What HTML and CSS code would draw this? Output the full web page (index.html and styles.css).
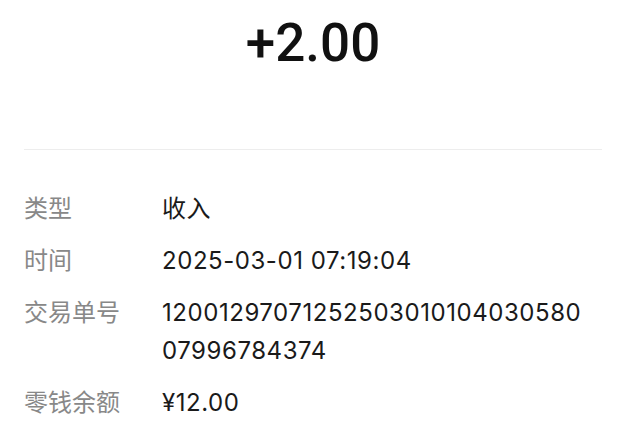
FILE: index.html
```html
<!DOCTYPE html>
<html lang="zh">
<head>
<meta charset="utf-8">
<link rel="stylesheet" href="styles.css">
</head>
<body>
<div class="page">
  <div class="amount">+2.00</div>
  <div class="divider"></div>
  <div class="details">
    <div class="row"><div class="label">类型</div><div class="value">收入</div></div>
    <div class="row"><div class="label">时间</div><div class="value">2025-03-01 07:19:04</div></div>
    <div class="row"><div class="label">交易单号</div><div class="value">1200129707125250301010403058007996784374</div></div>
    <div class="row"><div class="label">零钱余额</div><div class="value">¥12.00</div></div>
  </div>
</div>
</body>
</html>
```
FILE: styles.css
```css
html, body {
  margin: 0;
  padding: 0;
  background: #ffffff;
}
.page {
  width: 624px;
  padding: 0 22px 0 24px;
  box-sizing: border-box;
  font-family: Inter, "Noto Sans CJK SC", sans-serif;
}
.amount {
  text-align: center;
  font-family: Roboto, "Noto Sans", sans-serif;
  font-size: 53px;
  font-weight: 500;
  line-height: 64px;
  padding-top: 11px;
  height: 149px;
  box-sizing: border-box;
  color: #111111;
}
.divider {
  height: 1px;
  background: #ededed;
}
.details {
  display: flex;
  flex-direction: column;
  gap: 14px;
  padding-top: 40px;
}
.row {
  display: flex;
  font-size: 24px;
  line-height: 38px;
}
.label {
  width: 138px;
  flex: none;
  color: #888888;
}
.value {
  width: 428px;
  flex: none;
  color: #1a1a1a;
  letter-spacing: 0.55px;
  word-break: break-all;
}
```
